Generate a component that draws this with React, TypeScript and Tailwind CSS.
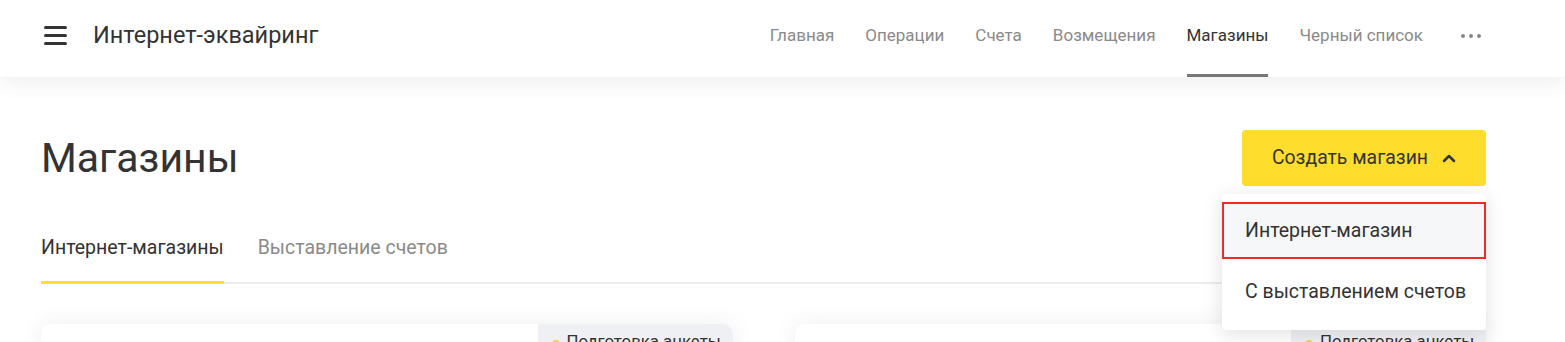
import React from 'react';

const navItems = ['Главная', 'Операции', 'Счета', 'Возмещения', 'Магазины', 'Черный список'];

const Header: React.FC = () => (
    <header className="relative z-10 h-[77px] bg-white flex items-stretch pl-[44px] pr-[84px] shadow-[0_4px_22px_rgba(0,0,0,0.08)]">
        <div className="flex items-center pb-[6px]">
            <button className="flex flex-col gap-[5px] w-[23px] mr-[26px]">
                <span className="block h-[3px] w-full bg-[#333] rounded-sm" />
                <span className="block h-[3px] w-full bg-[#333] rounded-sm" />
                <span className="block h-[3px] w-full bg-[#333] rounded-sm" />
            </button>
            <div className="text-[23.5px] text-[#333]">Интернет-эквайринг</div>
        </div>
        <nav className="ml-auto flex items-stretch gap-[31px] text-[17px] pl-[4px]">
            {navItems.map(item => (
                <div
                    key={item}
                    className={
                        item === 'Магазины'
                            ? 'flex items-center text-[#333] border-b-[3px] border-[#777] pb-[3px]'
                            : 'flex items-center text-[#8a8a8a] pb-[6px]'
                    }
                >
                    {item}
                </div>
            ))}
            <div className="flex items-center gap-[4px] ml-[7px] pb-[6px]">
                <span className="w-[4px] h-[4px] rounded-full bg-[#888]" />
                <span className="w-[4px] h-[4px] rounded-full bg-[#888]" />
                <span className="w-[4px] h-[4px] rounded-full bg-[#888]" />
            </div>
        </nav>
    </header>
);

const Card: React.FC = () => (
    <div className="h-[60px] bg-white rounded-t-[10px] shadow-[0_0_24px_rgba(0,0,0,0.07)] flex justify-end overflow-hidden">
        <div className="w-[195px] h-[30px] bg-[#eef0f3] rounded-bl-[10px] flex items-start pt-[6px] pl-[14px] gap-[7px] text-[16.8px] leading-[22px] text-[#333] whitespace-nowrap">
            <span className="mt-[10px] w-[8px] h-[8px] rounded-full bg-[#f8d42a] shrink-0" />
            <span>Подготовка анкеты</span>
        </div>
    </div>
);

export default function App() {
    return (
        <div className="w-[1565px] h-[342px] overflow-hidden bg-white" style={{ fontFamily: 'Roboto, "Liberation Sans", sans-serif' }}>
            <Header />
            <main className="pl-[41px] pr-[79px]">
                <div className="flex items-start justify-between pt-[53px]">
                    <h1 className="text-[41px] leading-[52px] text-[#333] mt-[2px]">Магазины</h1>
                    <div className="relative">
                        <button className="w-[244px] h-[56px] bg-[#ffdd2d] rounded-[4px] flex items-center justify-center gap-[14px] text-[19.4px] text-[#333]">
                            <span>Создать магазин</span>
                            <svg width="14" height="10" viewBox="0 0 14 10" fill="none">
                                <path d="M2 8l5-5 5 5" stroke="#333" strokeWidth="2.5" strokeLinecap="round" strokeLinejoin="round" />
                            </svg>
                        </button>
                        <div className="absolute right-0 top-[64px] w-[264px] bg-white rounded-[4px] shadow-[0_4px_20px_rgba(0,0,0,0.12)] pt-[8px] pb-[8px] z-20">
                            <div className="h-[57px] flex items-center pl-[21px] text-[19.5px] text-[#333] bg-[#f6f7f8] border-2 border-[#f02c22]">
                                Интернет-магазин
                            </div>
                            <div className="h-[63px] flex items-center pl-[23px] pt-[2px] text-[19.5px] text-[#333]">
                                С выставлением счетов
                            </div>
                        </div>
                    </div>
                </div>
                <div className="mt-[47px] flex gap-[34px] border-b-2 border-[#ececec] text-[19.5px]">
                    <div className="pb-[19px] text-[#333] border-b-[3px] border-[#ffdd2d] -mb-[2px]">Интернет-магазины</div>
                    <div className="pb-[19px] text-[#8a8a8a]">Выставление счетов</div>
                </div>
                <div className="mt-[40px] grid grid-cols-2 gap-[62px]">
                    <Card />
                    <Card />
                </div>
            </main>
        </div>
    );
}
